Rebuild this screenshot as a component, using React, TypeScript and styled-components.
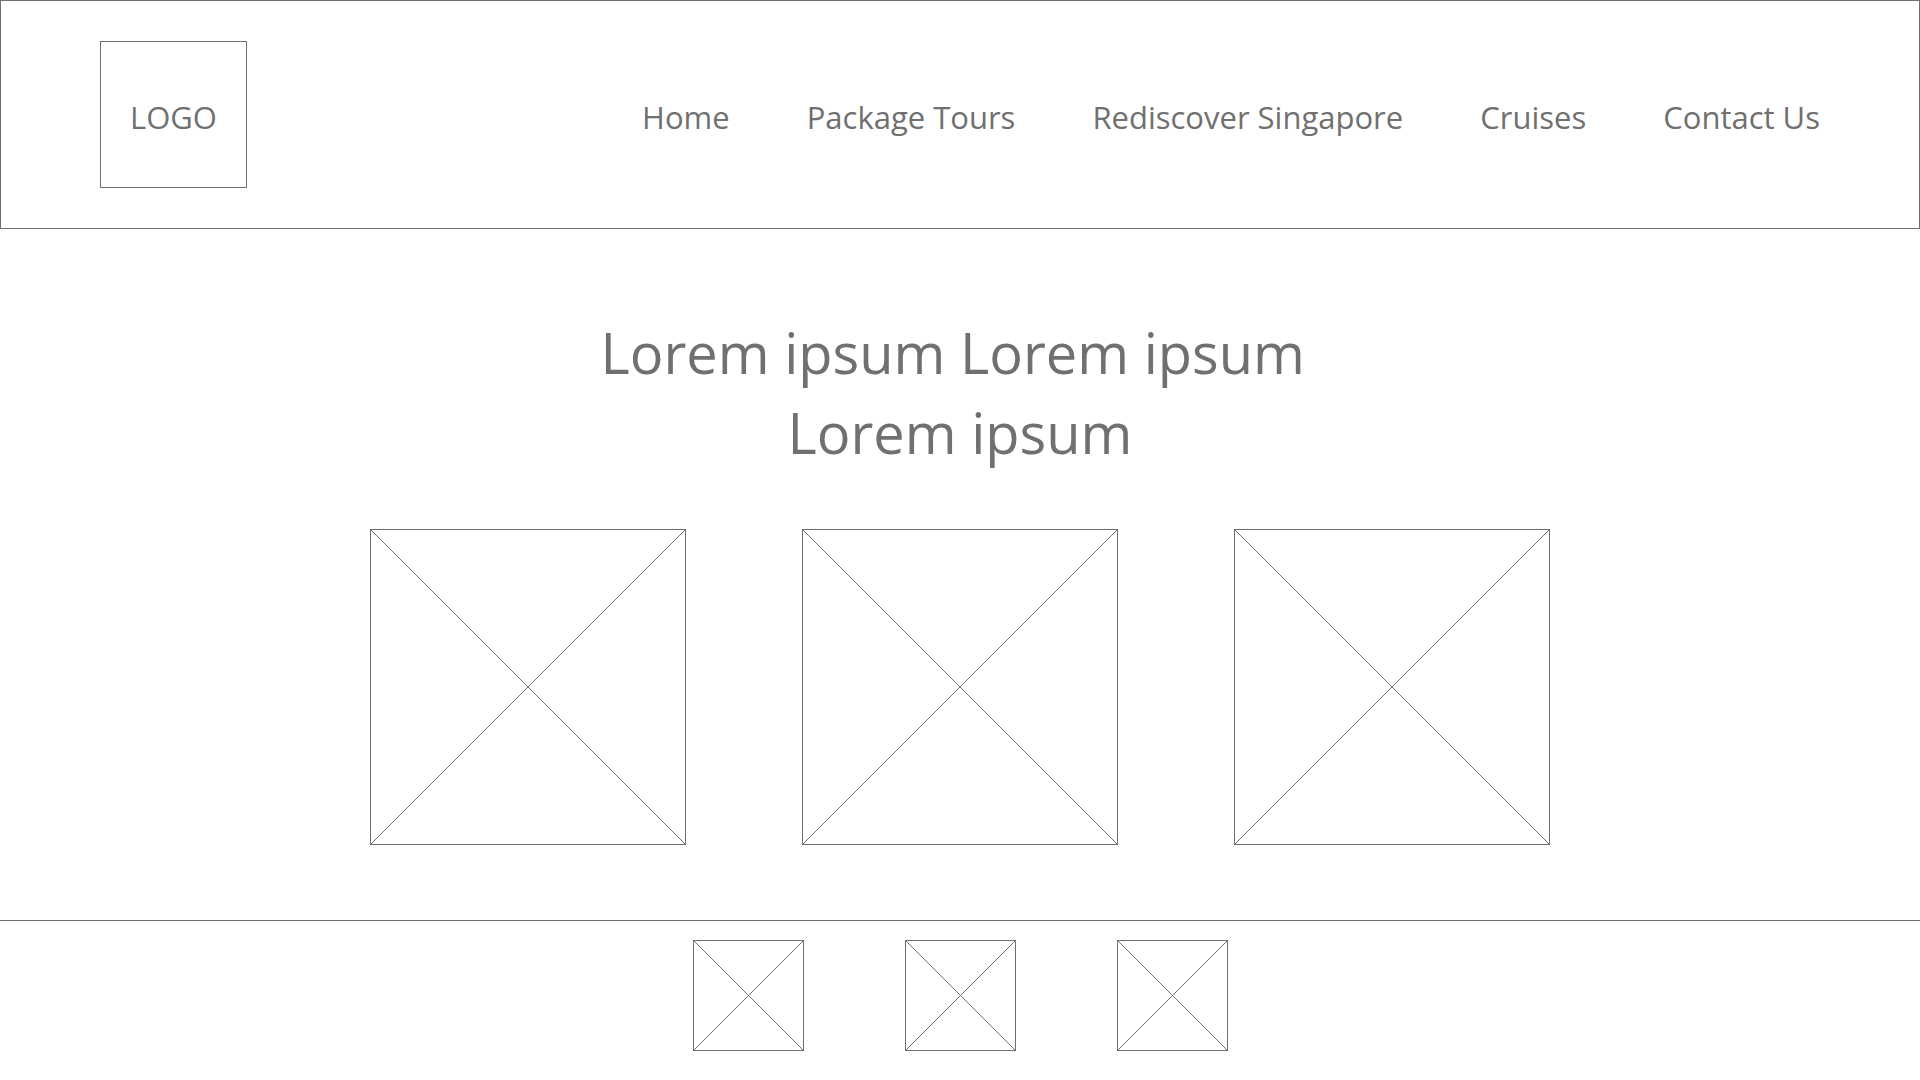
import React from "react";
import styled, { createGlobalStyle } from "styled-components";

const INK = "#707070";

const GlobalStyle = createGlobalStyle`
  *, *::before, *::after { box-sizing: border-box; }
  body {
    margin: 0;
    background: #fff;
    color: ${INK};
    font-family: "Segoe UI", "Open Sans", "Noto Sans", sans-serif;
  }
`;

const Header = styled.header`
  display: flex;
  align-items: center;
  justify-content: space-between;
  padding: 40px 99px;
  border: 1px solid ${INK};
`;

const Logo = styled.a`
  display: flex;
  align-items: center;
  justify-content: center;
  width: 147px;
  height: 147px;
  padding-top: 5px;
  border: 1px solid ${INK};
  color: inherit;
  font-size: 31px;
  line-height: 44px;
  text-decoration: none;
`;

const NavList = styled.ul`
  display: flex;
  gap: 77px;
  margin: 0;
  padding: 5px 0 0;
  list-style: none;
`;

const NavLink = styled.a`
  color: inherit;
  font-size: 31px;
  line-height: 44px;
  text-decoration: none;
  white-space: nowrap;
`;

const Main = styled.main`
  display: flex;
  flex-direction: column;
  align-items: center;
  padding: 83px 24px 75px;
`;

const Title = styled.h1`
  margin: 0 0 57px;
  font-size: 56px;
  font-weight: 400;
  line-height: 80px;
  text-align: center;
`;

const Row = styled.div<{ $gap: number }>`
  display: flex;
  justify-content: center;
  gap: ${(p) => p.$gap}px;
`;

const Frame = styled.div<{ $size: number }>`
  width: ${(p) => p.$size}px;
  height: ${(p) => p.$size}px;
  border: 1px solid ${INK};
`;

const Cross = styled.svg`
  display: block;
  width: 100%;
  height: 100%;
  stroke: ${INK};
  stroke-width: 1;
`;

const Footer = styled.footer`
  padding: 19px 24px 29px;
  border-top: 1px solid ${INK};
`;

function Placeholder({ size, label }: { size: number; label: string }) {
  return (
    <Frame $size={size} role="img" aria-label={label}>
      <Cross aria-hidden="true">
        <line x1="0" y1="0" x2="100%" y2="100%" />
        <line x1="100%" y1="0" x2="0" y2="100%" />
      </Cross>
    </Frame>
  );
}

const links = ["Home", "Package Tours", "Rediscover Singapore", "Cruises", "Contact Us"];
const slots = [1, 2, 3];

export default function App() {
  return (
    <>
      <GlobalStyle />
      <Header>
        <Logo href="#home">LOGO</Logo>
        <nav aria-label="Main">
          <NavList>
            {links.map((name) => (
              <li key={name}>
                <NavLink href={"#" + name.toLowerCase().replace(/ /g, "-")}>{name}</NavLink>
              </li>
            ))}
          </NavList>
        </nav>
      </Header>
      <Main>
        <Title>
          Lorem ipsum Lorem ipsum&nbsp;
          <br />
          Lorem ipsum
        </Title>
        <Row $gap={116}>
          {slots.map((n) => (
            <Placeholder key={n} size={316} label={`Image ${n}`} />
          ))}
        </Row>
      </Main>
      <Footer>
        <Row $gap={101}>
          {slots.map((n) => (
            <Placeholder key={n} size={111} label={`Social ${n}`} />
          ))}
        </Row>
      </Footer>
    </>
  );
}
